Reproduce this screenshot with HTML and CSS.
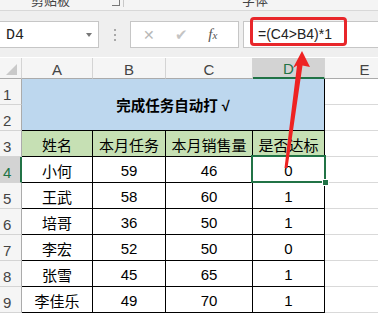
FILE: index.html
```html
<!DOCTYPE html>
<html lang="zh">
<head>
	<meta charset="utf-8">
	<title>完成任务自动打 √</title>
	<link rel="stylesheet" href="styles.css">
</head>
<body>

	<div class="ribbon">
		<span class="rb-label rb-clip">剪贴板</span>
		<span class="rb-launch"></span>
		<span class="rb-sep"></span>
		<span class="rb-label rb-font">字体</span>
	</div>

	<div class="fbar">
		<div class="namebox">
			<span class="name">D4</span>
			<span class="drop"></span>
		</div>
		<div class="dots"><i></i><i></i><i></i></div>
		<div class="btns">
			<span class="btn x">&#x2715;</span>
			<span class="btn ok">&#x2714;</span>
			<span class="btn fx">f<small>x</small></span>
		</div>
		<div class="formula">=(C4&gt;B4)*1</div>
	</div>

	<table class="sheet">
		<colgroup>
			<col class="c-rh">
			<col class="c-a">
			<col class="c-b">
			<col class="c-c">
			<col class="c-d">
			<col class="c-e">
		</colgroup>
		<tr class="colhead">
			<td class="corner"><span class="tri"></span></td>
			<td>A</td>
			<td>B</td>
			<td>C</td>
			<td class="on">D</td>
			<td>E</td>
		</tr>
		<tr>
			<td class="rh">1</td>
			<td class="title" colspan="4" rowspan="2">完成任务自动打 √</td>
			<td class="blank"></td>
		</tr>
		<tr>
			<td class="rh">2</td>
			<td class="blank"></td>
		</tr>
		<tr class="head">
			<td class="rh">3</td>
			<td>姓名</td>
			<td>本月任务</td>
			<td>本月销售量</td>
			<td>是否达标</td>
			<td class="blank"></td>
		</tr>
		<tr>
			<td class="rh on">4</td>
			<td>小何</td>
			<td>59</td>
			<td>46</td>
			<td class="sel">0</td>
			<td class="blank"></td>
		</tr>
		<tr>
			<td class="rh">5</td>
			<td>王武</td>
			<td>58</td>
			<td>60</td>
			<td>1</td>
			<td class="blank"></td>
		</tr>
		<tr>
			<td class="rh">6</td>
			<td>培哥</td>
			<td>36</td>
			<td>50</td>
			<td>1</td>
			<td class="blank"></td>
		</tr>
		<tr>
			<td class="rh">7</td>
			<td>李宏</td>
			<td>52</td>
			<td>50</td>
			<td>0</td>
			<td class="blank"></td>
		</tr>
		<tr>
			<td class="rh">8</td>
			<td>张雪</td>
			<td>45</td>
			<td>65</td>
			<td>1</td>
			<td class="blank"></td>
		</tr>
		<tr>
			<td class="rh">9</td>
			<td>李佳乐</td>
			<td>49</td>
			<td>70</td>
			<td>1</td>
			<td class="blank"></td>
		</tr>
	</table>

	<!-- callout drawn over the sheet -->
	<div class="callout"></div>
	<svg class="arrow" width="378" height="314" viewBox="0 0 378 314">
		<polygon points="302,51 310,67 302.5,65.5 287.5,168 284.5,168 297,65.5 293,68" fill="#ee2222"/>
	</svg>

</body>
</html>
```

FILE: styles.css
```css
html, body {
	margin: 0;
	padding: 0;
}

body {
	width: 378px;
	height: 314px;
	overflow: hidden;
	position: relative;
	background: #fff;
	font-family: "Liberation Sans", "Noto Sans CJK SC", sans-serif;
	color: #000;
}

/* ribbon bottom, cut off */

.ribbon {
	height: 10px;
	background: #f4f4f4;
	border-bottom: 1px solid #d8d8d8;
	overflow: hidden;
	display: flex;
	align-items: flex-start;
}

.rb-label {
	font-family: "Noto Sans CJK SC", sans-serif;
	font-size: 13px;
	line-height: 13px;
	margin-top: -7px;
	color: #444;
}

.rb-clip {
	margin-left: 31px;
}

.rb-launch {
	width: 7px;
	height: 5px;
	margin-left: 42px;
	border-right: 1px solid #777;
	border-bottom: 1px solid #777;
}

.rb-sep {
	width: 1px;
	height: 7px;
	margin-left: 3px;
	background: #c8c8c8;
}

.rb-font {
	margin-left: 118px;
}

/* formula bar */

.fbar {
	height: 46px;
	box-sizing: border-box;
	padding-top: 10px;
	background: #efefef;
	display: flex;
	align-items: flex-start;
}

.namebox {
	width: 100px;
	height: 27px;
	box-sizing: border-box;
	margin-left: -1px;
	background: #fff;
	border: 1px solid #c6c6c6;
	display: flex;
	align-items: center;
	justify-content: space-between;
	padding: 0 6px 0 6px;
}

.name {
	font-family: "Liberation Mono", monospace;
	font-size: 15px;
	color: #222;
	padding-top: 1px;
}

.drop {
	width: 0;
	height: 0;
	border-left: 3px solid transparent;
	border-right: 3px solid transparent;
	border-top: 4px solid #777;
}

.dots {
	width: 31px;
	height: 27px;
	display: flex;
	flex-direction: column;
	align-items: center;
	justify-content: center;
	gap: 3px;
}

.dots i {
	width: 2px;
	height: 2px;
	background: #a8a8a8;
}

.btns {
	width: 109px;
	height: 27px;
	box-sizing: border-box;
	background: #fff;
	border: 1px solid #c6c6c6;
	display: flex;
	align-items: center;
	padding-left: 12px;
}

.btn {
	width: 36px;
	font-size: 14px;
	color: #b8b8b8;
}

.btn.ok {
	font-size: 15px;
	color: #c4c4c4;
	padding-left: 2px;
}

.btn.fx {
	font-family: "Liberation Serif", serif;
	font-style: italic;
	font-size: 15px;
	color: #555;
	padding-left: 4px;
}

.btn.fx small {
	font-size: 11px;
}

.formula {
	flex: 1;
	height: 27px;
	box-sizing: border-box;
	margin-left: 4px;
	margin-right: -2px;
	background: #fff;
	border: 1px solid #c6c6c6;
	padding-left: 14px;
	font-size: 14px;
	line-height: 25px;
	color: #222;
}

/* sheet */

.sheet {
	table-layout: fixed;
	border-collapse: separate;
	border-spacing: 0;
	width: 405px;
	margin-top: 1px;
}

.c-rh { width: 22px; }
.c-a { width: 71px; }
.c-b { width: 73px; }
.c-c { width: 87px; }
.c-d { width: 72px; }
.c-e { width: 80px; }

.sheet td {
	box-sizing: border-box;
	height: 26px;
	padding: 2px 0 0 0;
	text-align: center;
	vertical-align: middle;
	font-size: 15px;
	border-right: 1px solid #000;
	border-bottom: 1px solid #000;
	white-space: nowrap;
	overflow: hidden;
}

.colhead td {
	height: 21px;
	padding: 2px 0 0 0;
	background: #f5f5f5;
	color: #444;
	font-size: 15px;
	line-height: 17px;
	border-right: 1px solid #d4d4d4;
	border-bottom: 1px solid #ababab;
}

.colhead td.on {
	background: #d3d3d3;
	color: #217346;
	border-bottom: 2px solid #217346;
}

.corner {
	position: relative;
}

.tri {
	position: absolute;
	right: 4px;
	bottom: 3px;
	width: 0;
	height: 0;
	border-left: 11px solid transparent;
	border-bottom: 11px solid #c9c9c9;
}

.sheet td.rh {
	text-align: left;
	padding: 6px 0 0 3px;
	background: #f5f5f5;
	color: #444;
	border-right: 1px solid #ababab;
	border-bottom: 1px solid #d4d4d4;
}

.sheet td.rh.on {
	background: #d3d3d3;
	color: #217346;
	border-right: 2px solid #217346;
}

.sheet td.blank {
	border-right: 1px solid #d9d9d9;
	border-bottom: 1px solid #d9d9d9;
}

.sheet td.title {
	background: #bdd7ee;
	font-weight: bold;
	font-size: 14.5px;
	padding-top: 0;
}

.head td {
	background: #c6e0b4;
}

.head td.rh,
.head td.blank {
	background: #f5f5f5;
}

.head td.blank {
	background: #fff;
}

.sheet td.sel {
	position: relative;
	overflow: visible;
}

.sel::before {
	content: "";
	position: absolute;
	left: -2px;
	top: -2px;
	right: -2px;
	bottom: -1px;
	border: 2px solid #217346;
}

.sel::after {
	content: "";
	position: absolute;
	right: -5px;
	bottom: -4px;
	width: 5px;
	height: 5px;
	background: #217346;
	border: 1px solid #fff;
}

/* red callout */

.callout {
	position: absolute;
	left: 250px;
	top: 17px;
	width: 91px;
	height: 23px;
	border: 3px solid #e8262a;
	border-radius: 4px;
}

.arrow {
	position: absolute;
	left: 0;
	top: 0;
}
```
